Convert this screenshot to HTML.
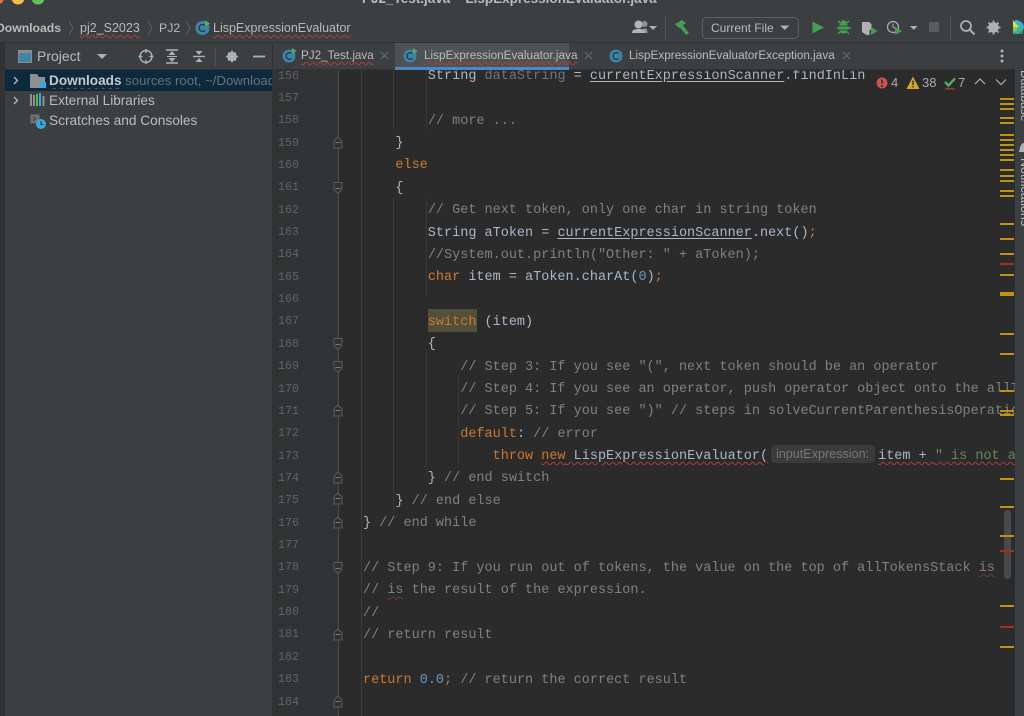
<!DOCTYPE html>
<html><head><meta charset="utf-8">
<style>
html,body{margin:0;padding:0;width:1024px;height:716px;overflow:hidden;background:#2b2b2b}
body{position:relative;font-family:"Liberation Sans",sans-serif;color:#bbbbbb}
.a{position:absolute;white-space:pre}
#code{position:absolute;margin:0;font:13.5px/22.36px "Liberation Mono",monospace;color:#a9b7c6;white-space:pre}
#nums{position:absolute;left:278px;top:64.500px;margin:0;font:11.7px/22.36px "Liberation Mono",monospace;color:#606366;white-space:pre}
.k{color:#cc7832}.c{color:#808080}.n{color:#6897bb}.s{color:#6a8759}.d{color:#72737a}.u{text-decoration:underline;text-underline-offset:2px}
.w{text-decoration:underline wavy #a8403c 1px;text-underline-offset:2px}
.t{line-height:16px}
.r{text-decoration:underline wavy #a8403c 1px;text-underline-offset:2px;text-decoration-skip-ink:none}
.q{text-decoration:underline wavy #6e3b39 1px;text-underline-offset:2px;text-decoration-skip-ink:none}
</style></head>
<body>
<!-- top chrome -->
<div class="a" style="left:0;top:0;width:1024px;height:43px;background:#3c3f41;border-bottom:1px solid #323232;box-sizing:border-box"></div>
<svg class="a" style="left:0;top:0" width="60" height="8"><circle cx="-2" cy="-2" r="6" fill="#ed6a5e"/><circle cx="18" cy="-2" r="6.500" fill="#f5bd4f"/><circle cx="38" cy="-2" r="6.500" fill="#61c454"/></svg>
<div class="a" style="left:362px;top:-9px;font-size:13.5px;line-height:16px;font-weight:bold;color:#b9babb">PJ2_Test.java – LispExpressionEvaluator.java</div>
<!-- breadcrumb -->
<div class="a t" style="left:-4px;top:20px;font-weight:bold;font-size:12.2px">Downloads</div>
<div class="a t" style="left:80px;top:20px;font-size:12.5px"><span class="r">pj2_S2023</span></div>
<div class="a t" style="left:159px;top:20px;font-size:12.3px"><span>PJ2</span></div>
<div class="a t" style="left:213px;top:20px;font-size:12.5px"><span class="r">LispExpressionEvaluator</span></div>
<svg class="a" style="left:0;top:0" width="240" height="42" fill="none" stroke="#5e6163" stroke-width="1"><path d="M69 21l4 7-4 7M148 21l4 7-4 7M186 21l4 7-4 7"/>
<circle cx="202.500" cy="28" r="7" fill="#3f84a4" stroke="none"/><path d="M205 25.500a3.500 3.500 0 1 0 0 5" stroke="#1f3a4a" stroke-width="1.300"/><path d="M205 20l5 3.500-5 3.500z" fill="#59a869" stroke="none"/></svg>
<!-- toolbar right -->
<svg class="a" style="left:620px;top:10px" width="404" height="32">
<circle cx="24.500" cy="14" r="3" fill="#8f9192"/><path d="M21 23v-3c2-1 4-2 5-1.500 1 .5 1.500 1.500 1.500 4.500z" fill="#8f9192"/>
<circle cx="18.500" cy="14.500" r="4" fill="#b5b5b5"/><path d="M12 23c0-3.500 3-4 6.500-4s6.500 .5 6.500 4z" fill="#b5b5b5"/>
<path d="M29 16h8l-4 4z" fill="#afb1b3"/>
<rect x="45" y="7" width="1" height="22" fill="#515355"/>
<path d="M55 14l7-4 4 3-7 5z" fill="#499c54"/><path d="M61 16l6.500 8" stroke="#499c54" stroke-width="3.500"/>
<rect x="82.500" y="7.500" width="96" height="21" rx="4" fill="#3c3f41" stroke="#5e6060"/>
<path d="M160 15.500h9.500l-4.750 4.500z" fill="#afb1b3"/>
<path d="M192.500 11.500l11.500 6-11.500 6z" fill="#499c54"/>
<g><ellipse cx="223.500" cy="18" rx="5" ry="5.500" fill="#499c54"/><circle cx="223.500" cy="13" r="2.800" fill="#499c54"/><path d="M218 11l2.500 2M229 11l-2.500 2M217 18h2M228 18h3M218 24l2-2M229 24l-2-2" stroke="#499c54" stroke-width="1.500"/><path d="M219 16h9M219 20h9" stroke="#3c3f41" stroke-width="1"/></g>
<path d="M242 12h7l2.500 2v5l-2 1v5h-3l-4.500-3z" fill="#afb1b3"/><path d="M251 17l6.500 4-6.500 4z" fill="#499c54"/>
<circle cx="273" cy="17" r="5.500" fill="none" stroke="#afb1b3" stroke-width="1.200"/><path d="M273 13.500v3.500l2.500 1.500" fill="none" stroke="#afb1b3"/><path d="M275 17l7 4-7 4z" fill="#499c54"/>
<path d="M290 16h7.500l-3.750 4z" fill="#afb1b3"/>
<rect x="309" y="12" width="10" height="10" fill="#5a5c5e"/>
<rect x="330" y="7" width="1" height="22" fill="#515355"/>
<circle cx="346" cy="16" r="5" fill="none" stroke="#afb1b3" stroke-width="1.700"/><path d="M350 20l4.500 4.500" stroke="#afb1b3" stroke-width="2"/>
<circle cx="373.500" cy="17.500" r="3.800" fill="none" stroke="#afb1b3" stroke-width="3"/><path d="M373.500 10.500v14M366.500 17.500h14M368.500 12.500l10 10M378.500 12.500l-10 10" stroke="#afb1b3" stroke-width="1.700"/>
<path d="M395 10c4 0 9 3 9 7s-5 7-9 7z" fill="#39b0d0"/><path d="M393 10l6 7-6 7z" fill="#e0e040"/><path d="M393 17h10v7h-10z" fill="#3fb37a" opacity=".6"/>
</svg>
<div class="a" style="left:711px;top:20px;font-size:12px;line-height:16px">Current File</div>

<!-- left strip & project -->
<div class="a" style="left:0;top:43px;width:5px;height:673px;background:#313335"></div>
<div class="a" style="left:5px;top:43px;width:268px;height:673px;background:#3c3f41"></div>
<div class="a" style="left:5px;top:70px;width:268px;height:21px;background:#0d293e"></div>
<div class="a" style="left:272px;top:43px;width:1px;height:673px;background:#323232"></div>
<div class="a" style="left:0;top:69px;width:273px;height:1px;background:#323232"></div>
<svg class="a" style="left:0;top:43px" width="273" height="100" fill="none">
<rect x="18.500" y="7.500" width="13" height="12" fill="#3f84a4" stroke="#8a8d8f"/><rect x="19" y="8" width="12" height="2" fill="#8a8d8f"/>
<path d="M97 11h10l-5 5z" fill="#afb1b3"/>
<circle cx="146" cy="13.500" r="6" stroke="#afb1b3" stroke-width="1.400"/><path d="M146 6v4M146 17v4M138.500 13.500h4M149.500 13.500h4" stroke="#afb1b3" stroke-width="1.400"/>
<path d="M166 7h12M166 20h12" stroke="#afb1b3" stroke-width="1.400"/><path d="M172 8l3.500 4h-7zM172 19l3.500-4h-7z" fill="#afb1b3"/><path d="M167 13.500h10" stroke="#afb1b3"/>
<path d="M193 13.500h12" stroke="#afb1b3" stroke-width="1.400"/><path d="M199 12l3.500-4h-7zM199 15l3.500 4h-7zM195 6.500h8M195 20.500h8" fill="#afb1b3"/>
<rect x="215" y="5" width="1" height="18" fill="#515355"/>
<circle cx="232" cy="13.500" r="3.500" stroke="#afb1b3" stroke-width="2.500"/><path d="M232 7.500v12M226 13.500h12M228 9.500l8 8M236 9.500l-8 8" stroke="#afb1b3" stroke-width="1.500"/>
<path d="M253 13.500h12" stroke="#afb1b3" stroke-width="1.800"/>
<path d="M14 34l3.500 3.500-3.500 3.500M14 54l3.500 3.500-3.500 3.500" stroke="#b8babb" stroke-width="1.300"/>
<path d="M30 31h7l2 3h6v11H30z" fill="#8c9094"/><rect x="40" y="39" width="6" height="6" fill="#3aa7de"/>
<path d="M31 51v12M34 52v11" stroke="#8c9094" stroke-width="2"/><path d="M37 51v12" stroke="#62b543" stroke-width="2"/><path d="M40 50v13" stroke="#3aa7de" stroke-width="2"/><path d="M43.500 53v10" stroke="#8c9094" stroke-width="2"/>
<rect x="30.500" y="71.500" width="9" height="9" fill="#6e7174"/><path d="M33 73.500l2.500 2-2.500 2" stroke="#3c3f41"/><circle cx="41" cy="81" r="5" fill="#3aa7de"/><path d="M41 78v3.500h2.500" stroke="#20323c"/>
</svg>
<div class="a" style="left:37px;top:48px;font-size:14px;line-height:16px;color:#bbbbbb">Project</div>
<div class="a" style="left:49px;top:73px;font-size:13.6px;line-height:16px;width:223px;overflow:hidden"><b class="r" style="color:#c6c8c9">Downloads</b><span style="color:#6a7377;font-size:13.2px"> sources root, ~/Downloads</span></div>
<div class="a" style="left:49px;top:93px;font-size:13.6px;line-height:16px">External Libraries</div>
<div class="a" style="left:49px;top:113px;font-size:13.7px;line-height:16px">Scratches and Consoles</div>

<!-- tabs -->
<div class="a" style="left:273px;top:43px;width:751px;height:27px;background:#3c3f41"></div>
<div class="a" style="left:395px;top:43px;width:174px;height:24px;background:#4e5254"></div>
<div class="a" style="left:395px;top:67px;width:174px;height:3px;background:#4a88c7"></div>
<div class="a" style="left:273px;top:69px;width:122px;height:1px;background:#323232"></div>
<div class="a" style="left:569px;top:69px;width:446px;height:1px;background:#323232"></div>
<svg class="a" style="left:273px;top:43px" width="751" height="27" fill="none">
<g><circle cx="16" cy="13" r="6.500" fill="#3f84a4"/><path d="M18.500 10.500a3.300 3.300 0 1 0 0 5" stroke="#1f3a4a" stroke-width="1.300"/><path d="M19 5l4.500 3-4.500 3z" fill="#59a869"/></g>
<g transform="translate(121 0)"><circle cx="16" cy="13" r="6.500" fill="#3f84a4"/><path d="M18.500 10.500a3.300 3.300 0 1 0 0 5" stroke="#1f3a4a" stroke-width="1.300"/><path d="M19 5l4.500 3-4.500 3z" fill="#59a869"/></g>
<g transform="translate(327 0)"><circle cx="16" cy="13" r="6.500" fill="#3f84a4"/><path d="M18.500 10.500a3.300 3.300 0 1 0 0 5" stroke="#1f3a4a" stroke-width="1.300"/></g>
<path d="M108 9l7 7M115 9l-7 7M312 9l7 7M319 9l-7 7M570 9l7 7M577 9l-7 7" stroke="#686b6d" stroke-width="1.100"/>
<circle cx="729" cy="8" r="1.500" fill="#afb1b3"/><circle cx="729" cy="13" r="1.500" fill="#afb1b3"/><circle cx="729" cy="18" r="1.500" fill="#afb1b3"/>
</svg>
<div class="a" style="left:301px;top:48px;font-size:11.7px;line-height:16px"><span class="r">PJ2_Test.java</span></div>
<div class="a" style="left:424px;top:48px;font-size:11.75px;line-height:16px"><span class="r">LispExpressionEvaluator.java</span></div>
<div class="a" style="left:629px;top:48px;font-size:11.75px;line-height:16px">LispExpressionEvaluatorException.java</div>

<!-- editor -->
<div class="a" style="left:273px;top:70px;width:65px;height:646px;background:#313335"></div>
<div class="a" style="left:1015px;top:43px;width:9px;height:673px;background:#3c3f41"></div>
<svg class="a" style="left:273px;top:70px" width="751" height="646" fill="none">
<path d="M65.500 0V646" stroke="#4a4c4e"/>
<path d="M88.500 0V646" stroke="#3a3b3c"/>
<path d="M120.500 0V60M120.500 128V440" stroke="#383838"/>
<path d="M153.500 0V60M153.500 128V226M153.500 282V406" stroke="#383838"/>
<path d="M185.500 304V396" stroke="#383838"/>
<g fill="#2f3132" stroke="#585a5c">
<path d="M61 78v-7l4-4 4 4v7z"/>
<path d="M61 112.500h8v7l-4 4-4-4z"/>
<path d="M61 268.500h8v7l-4 4-4-4z"/>
<path d="M61 291.500h8v7l-4 4-4-4z"/>
<path d="M61 346v-7l4-4 4 4v7z"/>
<path d="M61 413v-7l4-4 4 4v7z"/>
<path d="M61 434v-7l4-4 4 4v7z"/>
<path d="M61 458v-7l4-4 4 4v7z"/>
<path d="M61 492.500h8v7l-4 4-4-4z"/>
<path d="M61 570v-7l4-4 4 4v7z"/>
<path d="M61 637v-7l4-4 4 4v7z"/>
</g>
<g stroke="#787a7c"><path d="M62.500 72.500h5M62.500 118.500h5M62.500 274.500h5M62.500 297.500h5M62.500 340.500h5M62.500 407.500h5M62.500 428.500h5M62.500 452.500h5M62.500 498.500h5M62.500 564.500h5M62.500 631.500h5"/></g>
</svg>
<div class="a" style="left:428px;top:309px;width:49px;height:23px;background:#52503a"></div>
<div class="a" style="left:771px;top:445px;width:104px;height:18px;background:#3b3b3b;border-radius:4px"></div>
<pre id="nums">156
157
158
159
160
161
162
163
164
165
166
167
168
169
170
171
172
173
174
175
176
177
178
179
180
181
182
183
184</pre>
<div style="position:absolute;left:273px;top:70px;width:742px;height:646px;overflow:hidden">
<pre id="code" style="left:90px;top:-4px">        String <span class="d">dataString</span> = <span class="u">currentExpressionScanner</span>.findInLin

        <span class="c">// more ...</span>
    }
    <span class="k">else</span>
    {
        <span class="c">// Get next token, only one char in string token</span>
        String aToken = <span class="u">currentExpressionScanner</span>.next()<span class="k">;</span>
        <span class="c">//System.out.println("Other: " + aToken);</span>
        <span class="k">char</span> item = aToken.charAt(<span class="n">0</span>)<span class="k">;</span>

        <span class="k">switch</span> (item)
        {
            <span class="c">// Step 3: If you see "(", next token should be an operator</span>
            <span class="c">// Step 4: If you see an operator, push operator object onto the allTokensStack</span>
            <span class="c">// Step 5: If you see ")" // steps in solveCurrentParenthesisOperation() method</span>
            <span class="k">default</span>: <span class="c">// error</span>
                <span class="k">throw </span><span class="w"><span class="k">new</span> LispExpressionEvaluator(</span><span style="display:inline-block;width:110px"></span><span class="w">item + <span class="s">" is not a legal expression operator"</span></span>
        } <span class="c">// end switch</span>
    } <span class="c">// end else</span>
} <span class="c">// end while</span>

<span class="c">// Step 9: If you run out of tokens, the value on the top of allTokensStack <span class="q">is</span></span>
<span class="c">// <span class="q">is</span> the result of the expression.</span>
<span class="c">//</span>
<span class="c">// return result</span>

<span class="k">return</span> <span class="n">0.0</span><span class="k">;</span> <span class="c">// return the correct result</span>
</pre>
</div>
<div class="a" style="left:776px;top:447px;font-size:12.6px;line-height:15px;color:#787878">inputExpression:</div>

<!-- inspection widget -->
<div class="a" style="left:870px;top:70px;width:145px;height:24px;background:#2b2b2b"></div>
<svg class="a" style="left:870px;top:70px" width="145" height="26" fill="none">
<circle cx="12" cy="13" r="5.500" fill="#c75450"/><path d="M12 9.500v4M12 15v2" stroke="#2b2b2b" stroke-width="1.500"/>
<path d="M43 6.500l6.500 12.500h-13z" fill="#d4a52c"/><path d="M43 10.500v4.500M43 16v1.500" stroke="#2b2b2b" stroke-width="1.300"/>
<path d="M75 12l3.500 3.500L85 8.500" stroke="#59a869" stroke-width="2.400"/><path d="M75 19.500l2-1.500 2 1.500 2-1.500 2 1.500 2-1.500" stroke="#bc3f3c"/>
<path d="M105 14l5-5 5 5M126 9.500l5 5 5-5" stroke="#b0b2b3" stroke-width="1.200"/>
</svg>
<div class="a" style="left:891px;top:76px;font-size:13px;line-height:14px;color:#a9abad">4</div>
<div class="a" style="left:922px;top:76px;font-size:13px;line-height:14px;color:#a9abad">38</div>
<div class="a" style="left:958px;top:76px;font-size:13px;line-height:14px;color:#a9abad">7</div>

<!-- scrollbar & markers -->
<div class="a" style="left:1004px;top:510px;width:7px;height:69px;background:#4a4a4a;border-radius:4px"></div>
<svg class="a" style="left:1000px;top:60px" width="14" height="656">
<g fill="#be9117">
<rect y="38" width="14" height="2"/><rect y="43" width="14" height="2"/><rect y="48" width="14" height="2"/><rect y="57" width="14" height="2"/><rect y="62" width="14" height="2"/><rect y="74" width="14" height="2"/><rect y="79" width="14" height="2"/><rect y="84" width="14" height="2"/><rect y="89" width="14" height="2"/><rect y="94" width="14" height="2"/><rect y="99" width="14" height="2"/><rect y="109" width="14" height="2"/><rect y="115" width="14" height="2"/><rect y="120" width="14" height="2"/><rect y="130" width="14" height="2"/><rect y="135" width="14" height="2"/><rect y="163" width="14" height="2"/><rect y="178" width="14" height="2"/><rect y="193" width="14" height="2"/><rect y="214" width="14" height="2"/><rect y="232" width="14" height="4"/><rect y="273" width="14" height="2"/><rect y="293" width="14" height="2"/><rect y="330" width="14" height="2"/><rect y="350" width="14" height="2"/><rect y="354" width="14" height="2"/><rect y="418" width="14" height="2"/><rect y="446" width="14" height="2"/><rect y="475" width="14" height="2"/><rect y="545" width="14" height="2"/><rect y="586" width="14" height="2"/>
</g>
<g fill="#a52a2a"><rect y="203" width="14" height="2"/><rect y="490" width="14" height="2"/><rect y="566" width="14" height="2"/></g>
</svg>
<!-- right side tool labels -->
<div class="a" style="left:1019px;top:70px;font-size:12px;line-height:12px;color:#bbbbbb;writing-mode:vertical-rl">Database</div>
<svg class="a" style="left:1019px;top:142px" width="5" height="12"><path d="M5 1C2 1 1 5 0 10h5z" fill="#afb1b3"/></svg>
<div class="a" style="left:1019px;top:158px;font-size:12.5px;line-height:12px;color:#bbbbbb;writing-mode:vertical-rl">Notifications</div>
</body></html>
